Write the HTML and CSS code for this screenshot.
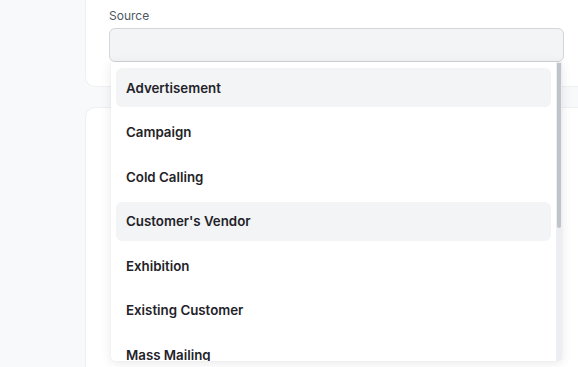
FILE: index.html
```html
<!DOCTYPE html>
<html>
<head>
<meta charset="utf-8">
<link rel="stylesheet" href="styles.css">
</head>
<body>
<div class="page">
  <div class="card card-top">
    <div class="field">
      <div class="label">Source</div>
      <div class="select-wrap">
        <div class="input"></div>
        <div class="dropdown">
          <div class="list">
            <div class="option active">Advertisement</div>
            <div class="option">Campaign</div>
            <div class="option">Cold Calling</div>
            <div class="option active">Customer's Vendor</div>
            <div class="option">Exhibition</div>
            <div class="option">Existing Customer</div>
            <div class="option">Mass Mailing</div>
            <div class="option">Reference</div>
            <div class="option">Sales Partner</div>
            <div class="option">Supplier Reference</div>
            <div class="option">Walk In</div>
          </div>
          <div class="scrollbar"><div class="thumb"></div></div>
        </div>
      </div>
    </div>
  </div>
  <div class="card card-next"></div>
</div>
</body>
</html>
```

FILE: styles.css
```css
html, body {
  margin: 0;
  padding: 0;
  height: 100%;
  overflow: hidden;
  background: #f8f9fa;
  font-family: "Inter", "Liberation Sans", sans-serif;
}
.page {
  display: flex;
  flex-direction: column;
  gap: 20px;
  padding-left: 85px;
  margin-top: -11px;
}
.card {
  width: 540px;
  background: #ffffff;
  border: 1px solid #eef0f2;
  border-radius: 10px;
  box-sizing: border-box;
}
.card-top {
  height: 98px;
  padding: 18px 0 0 23px;
}
.card-next {
  height: 400px;
}
.field {
  width: 455px;
}
.label {
  font-size: 12px;
  line-height: 16px;
  color: #4f5863;
  margin-bottom: 4px;
}
.select-wrap {
  position: relative;
}
.input {
  height: 34px;
  box-sizing: border-box;
  background: #f3f4f6;
  border: 1px solid #d3d6da;
  border-radius: 6px;
}
.dropdown {
  position: absolute;
  top: 100%;
  left: 2px;
  right: 2px;
  height: 299px;
  background: #ffffff;
  border-radius: 0 0 4px 4px;
  box-shadow: 0 2px 12px rgba(0, 0, 0, 0.09), 0 0 1px rgba(0, 0, 0, 0.12);
  overflow: hidden;
  display: flex;
}
.list {
  flex: 1;
  padding: 6px 5px 5px 5px;
  display: flex;
  flex-direction: column;
  gap: 5.6px;
}
.scrollbar {
  flex: 0 0 6px;
  background: #eceef1;
}
.thumb {
  height: 165px;
  margin: 1px 1px 0 1px;
  background: #bfc4ca;
  border-radius: 0 0 2px 2px;
}
.option {
  flex: 0 0 39px;
  display: flex;
  align-items: center;
  padding-left: 10px;
  border-radius: 6px;
  font-size: 13.3px;
  font-weight: 600;
  color: #1f2329;
}
.option.active {
  background: #f3f4f6;
}
```
